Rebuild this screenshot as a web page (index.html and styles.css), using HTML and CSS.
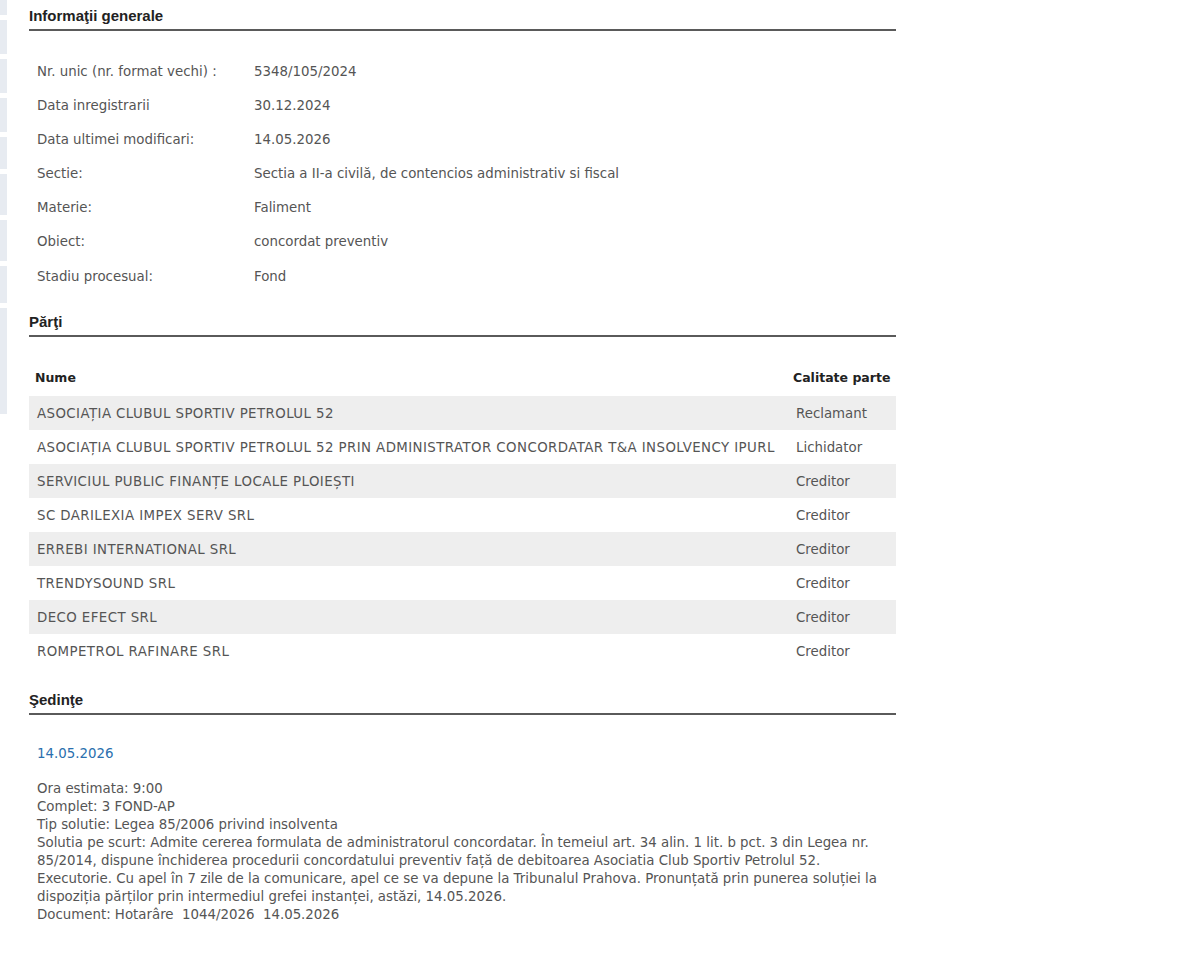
FILE: index.html
```html
<!DOCTYPE html>
<html lang="ro">
<head>
<meta charset="utf-8">
<title>Dosar 5348/105/2024</title>
<link rel="stylesheet" href="styles.css">
</head>
<body>
<div class="page">
  <aside class="side">
    <span class="blk b1"></span>
    <span class="blk b2"></span>
    <span class="blk b2"></span>
    <span class="blk b2"></span>
    <span class="blk b3"></span>
    <span class="blk b4"></span>
    <span class="blk b4"></span>
    <span class="blk b5"></span>
    <span class="blk b6"></span>
  </aside>
  <main class="content">
    <section class="sec">
      <h2 class="sec-title">Informaţii generale</h2>
      <div class="info">
        <div class="lbl">Nr. unic (nr. format vechi) :</div><div class="val">5348/105/2024</div>
        <div class="lbl">Data inregistrarii</div><div class="val">30.12.2024</div>
        <div class="lbl">Data ultimei modificari:</div><div class="val">14.05.2026</div>
        <div class="lbl">Sectie:</div><div class="val">Sectia a II-a civilă, de contencios administrativ si fiscal</div>
        <div class="lbl">Materie:</div><div class="val">Faliment</div>
        <div class="lbl">Obiect:</div><div class="val">concordat preventiv</div>
        <div class="lbl">Stadiu procesual:</div><div class="val">Fond</div>
      </div>
    </section>

    <section class="sec sec-parti">
      <h2 class="sec-title">Părţi</h2>
      <table class="parti">
        <colgroup>
          <col class="col-name">
          <col class="col-role">
        </colgroup>
        <thead>
          <tr><th class="c-name">Nume</th><th class="c-role">Calitate parte</th></tr>
        </thead>
        <tbody>
          <tr><td class="n">ASOCIAȚIA CLUBUL SPORTIV PETROLUL 52</td><td>Reclamant</td></tr>
          <tr><td class="n">ASOCIAȚIA CLUBUL SPORTIV PETROLUL 52 PRIN ADMINISTRATOR CONCORDATAR T&amp;A INSOLVENCY IPURL</td><td>Lichidator</td></tr>
          <tr><td class="n">SERVICIUL PUBLIC FINANȚE LOCALE PLOIEȘTI</td><td>Creditor</td></tr>
          <tr><td class="n">SC DARILEXIA IMPEX SERV SRL</td><td>Creditor</td></tr>
          <tr><td class="n">ERREBI INTERNATIONAL SRL</td><td>Creditor</td></tr>
          <tr><td class="n">TRENDYSOUND SRL</td><td>Creditor</td></tr>
          <tr><td class="n">DECO EFECT SRL</td><td>Creditor</td></tr>
          <tr><td class="n">ROMPETROL RAFINARE SRL</td><td>Creditor</td></tr>
        </tbody>
      </table>
    </section>

    <section class="sec sec-sedinte">
      <h2 class="sec-title">Şedinţe</h2>
      <div class="sedinta">
        <div class="sed-date">14.05.2026</div>
        <div class="sed-body">
          Ora estimata: 9:00<br>
          Complet: 3 FOND-AP<br>
          Tip solutie: Legea 85/2006 privind insolventa<br>
          Solutia pe scurt: Admite cererea formulata de administratorul concordatar. În temeiul art. 34 alin. 1 lit. b pct. 3 din Legea nr. 85/2014, dispune închiderea procedurii concordatului preventiv față de debitoarea Asociatia Club Sportiv Petrolul 52. Executorie. Cu apel în 7 zile de la comunicare, apel ce se va depune la Tribunalul Prahova. Pronunțată prin punerea soluției la dispoziția părților prin intermediul grefei instanței, astăzi, 14.05.2026.<br>
          Document: Hotarâre&nbsp; 1044/2026&nbsp; 14.05.2026
        </div>
      </div>
    </section>
  </main>
</div>
</body>
</html>
```

FILE: styles.css
```css
html, body {
  margin: 0;
  padding: 0;
  background: #ffffff;
}

body {
  font-family: "DejaVu Sans", Verdana, sans-serif;
  font-size: 13.35px;
  color: #555555;
}

.page {
  display: flex;
  align-items: flex-start;
  min-height: 953px;
}

.side {
  width: 7px;
  flex: 0 0 7px;
  display: flex;
  flex-direction: column;
  gap: 5px;
}

.blk {
  display: block;
  background: #e7ebf1;
}
.b1 { height: 15px; }
.b2 { height: 34px; }
.b3 { height: 32px; }
.b4 { height: 41px; }
.b5 { height: 37px; }
.b6 { height: 106px; }

.content {
  margin-left: 22px;
  width: 867px;
}

.sec-title {
  margin: 0;
  padding: 7px 0 4px;
  font-family: "Liberation Sans", Arial, sans-serif;
  font-size: 15px;
  line-height: 18px;
  font-weight: bold;
  color: #222222;
  border-bottom: 2px solid #5a5a5a;
}

.info {
  display: grid;
  grid-template-columns: 225px 1fr;
  grid-auto-rows: 34.17px;
  align-items: center;
  margin-top: 23px;
}

.lbl {
  padding-left: 8px;
}

.sec-parti {
  margin-top: 13px;
}

.parti {
  width: 100%;
  table-layout: fixed;
  border-collapse: collapse;
  margin-top: 21px;
}

.col-name { width: 759px; }
.col-role { width: 108px; }

.parti th {
  text-align: left;
  font-size: 12.5px;
  font-weight: bold;
  color: #222222;
  height: 38px;
  padding: 0 6px;
  vertical-align: middle;
  white-space: nowrap;
}

.parti th.c-role {
  padding-left: 5px;
  padding-right: 0;
}

.parti td {
  height: 34px;
  padding: 0 8px;
  vertical-align: middle;
  white-space: nowrap;
}

.parti td.n {
  letter-spacing: 0.42px;
}

.parti tbody tr:nth-child(odd) td {
  background: #eeeeee;
}

.sec-sedinte {
  margin-top: 16px;
}

.sedinta {
  padding: 30px 8px 0;
}

.sed-date {
  color: #2a6fae;
  line-height: 18px;
}

.sed-body {
  margin-top: 17px;
  line-height: 18px;
}
```
